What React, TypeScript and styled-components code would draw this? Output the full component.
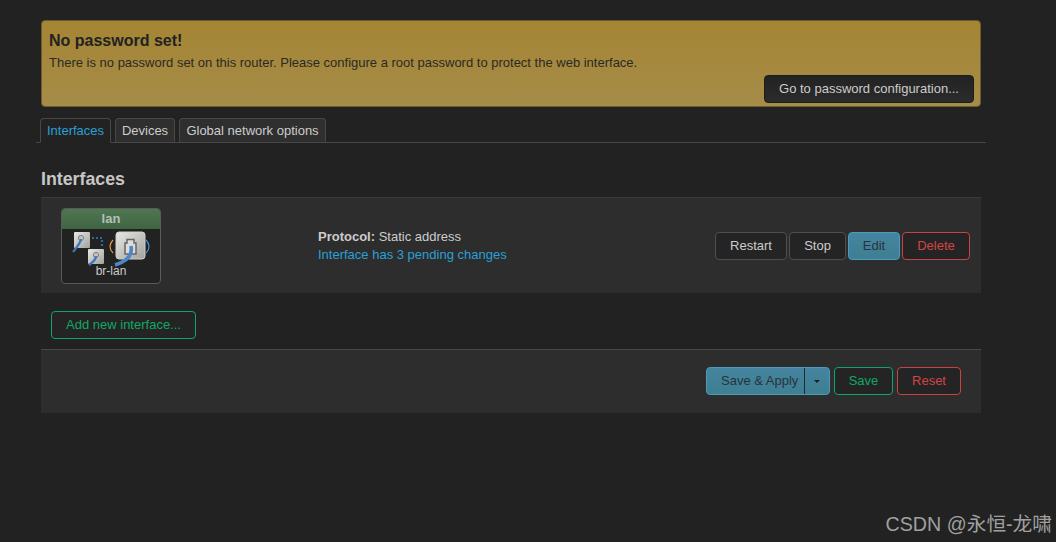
import React from "react";
import styled, { createGlobalStyle } from "styled-components";

const Global = createGlobalStyle`
  html, body { margin: 0; padding: 0; background: #222222; height: 100%; }
  body { font-family: "Liberation Sans", Arial, sans-serif; font-size: 13px; color: #cccccc; overflow: hidden; }
  #root { height: 100%; }
`;

const Page = styled.main`
  box-sizing: border-box;
  width: 940px;
  margin-left: 41px;
  padding-top: 20px;
`;

const Alert = styled.section`
  box-sizing: border-box;
  height: 87px;
  padding: 11px 6px 3px 7px;
  border: 1px solid #6d5c2b;
  border-radius: 4px;
  background: linear-gradient(#a58534, #a58c48);
  color: #222222;
  display: flex;
  flex-direction: column;
`;

const AlertTitle = styled.h4`
  margin: 0;
  font-size: 16px;
  line-height: 18px;
  font-weight: 700;
`;

const AlertText = styled.p`
  margin: 5px 0 0;
  font-size: 13px;
  line-height: 15px;
  color: #2a2a26;
`;

const AlertActions = styled.div`
  margin-top: auto;
  display: flex;
  justify-content: flex-end;
`;

const Button = styled.button<{ $tone?: "plain" | "dark" | "blue" | "red" | "green"; $w: number }>`
  box-sizing: border-box;
  width: ${(p) => p.$w}px;
  height: 28px;
  padding: 0 0 1px;
  border-radius: 4px;
  font-family: inherit;
  font-size: 13px;
  text-align: center;
  border: 1px solid
    ${(p) =>
      p.$tone === "blue" ? "#4a9bbd" : p.$tone === "red" ? "#c84343" : p.$tone === "green" ? "#0fa46a" : p.$tone === "dark" ? "#1c1c1c" : "#4e4e4e"};
  color: ${(p) =>
    p.$tone === "blue" ? "#27343b" : p.$tone === "red" ? "#d24545" : p.$tone === "green" ? "#10a865" : "#cccccc"};
  background: ${(p) =>
    p.$tone === "blue" ? "linear-gradient(#44849f, #3f7f92)" : p.$tone === "dark" ? "linear-gradient(#232323, #2b2b2b)" : "#242424"};
`;

const Tabs = styled.nav`
  display: flex;
  align-items: flex-end;
  gap: 4px;
  height: 24px;
  margin: 11px -5px 0 -5px;
  padding-left: 4px;
  border-bottom: 1px solid #484848;
`;

const Tab = styled.div<{ $active?: boolean; $w: number }>`
  box-sizing: border-box;
  width: ${(p) => p.$w}px;
  height: ${(p) => (p.$active ? 25 : 24)}px;
  margin-bottom: ${(p) => (p.$active ? -1 : 0)}px;
  text-align: center;
  font-size: 13px;
  line-height: 23px;
  border: 1px solid #484848;
  border-bottom: ${(p) => (p.$active ? "1px solid #222222" : "none")};
  border-radius: 4px 4px 0 0;
  background: ${(p) => (p.$active ? "#222222" : "#2f2f2f")};
  color: ${(p) => (p.$active ? "#2aa0d6" : "#cccccc")};
`;

const Heading = styled.h3`
  margin: 26px 0 0;
  font-size: 17.8px;
  line-height: 20px;
  font-weight: 700;
  color: #c6c6c6;
`;

const Row = styled.div`
  box-sizing: border-box;
  margin-top: 8px;
  height: 96px;
  display: grid;
  grid-template-columns: 277px 1fr auto;
  align-items: center;
  padding-right: 11px;
  background: #2d2d2d;
  border-top: 1px solid #3a3a3a;
`;

const BadgeCell = styled.div`
  padding-left: 20px;
`;

const Badge = styled.div`
  box-sizing: border-box;
  width: 100px;
  height: 76px;
  border: 1px solid #5a5a5a;
  border-radius: 4px;
  background: #222222;
  overflow: hidden;
  text-align: center;
  display: flex;
  flex-direction: column;
`;

const BadgeHead = styled.div`
  height: 20px;
  line-height: 19px;
  font-size: 13px;
  font-weight: 700;
  color: #b4c0b8;
  background: linear-gradient(#4f7750, #3f6442);
`;

const BadgeIcons = styled.div`
  height: 36px;
  display: flex;
  justify-content: center;
`;

const BadgeName = styled.div`
  font-size: 12px;
  line-height: 13px;
  color: #cccccc;
`;

const Info = styled.div`
  font-size: 13px;
  line-height: 18px;
`;

const Label = styled.strong`
  font-weight: 700;
`;

const Pending = styled.div`
  color: #2aa0d6;
`;

const Actions = styled.div`
  display: flex;
  gap: 2px;
`;

const AddRow = styled.div`
  padding: 18px 0 10px 10px;
`;

const Footer = styled.footer`
  box-sizing: border-box;
  height: 64px;
  padding: 17px 20px 0 0;
  display: flex;
  justify-content: flex-end;
  gap: 4px;
  background: #2d2d2d;
  border-top: 1px solid #484848;
`;

const Split = styled.div`
  box-sizing: border-box;
  width: 124px;
  height: 28px;
  display: flex;
  border: 1px solid #4a9bbd;
  border-radius: 4px;
  background: linear-gradient(#44849f, #3f7f92);
  color: #27343b;
  font-size: 13px;
  line-height: 25px;
`;

const SplitLabel = styled.span`
  box-sizing: border-box;
  width: 98px;
  padding-left: 14px;
  white-space: nowrap;
  border-right: 1px solid #1e2a30;
`;

const SplitArrow = styled.span`
  flex: 1;
  display: flex;
  align-items: center;
  justify-content: center;
`;

const Caret = styled.i`
  width: 0;
  height: 0;
  border-left: 3px solid transparent;
  border-right: 3px solid transparent;
  border-top: 3px solid #1c1c1c;
`;

const Watermark = styled.div`
  position: absolute;
  right: 4px;
  bottom: 5px;
  font-family: "Liberation Sans", "Noto Sans CJK SC", sans-serif;
  font-size: 19.7px;
  line-height: 26px;
  color: #a0a0a0;
`;

function PortIcons() {
  return (
    <svg width="82" height="38" viewBox="0 0 82 38" aria-hidden="true">
      <defs>
        <linearGradient id="pg" x1="0" y1="0" x2="1" y2="1">
          <stop offset="0" stopColor="#e8e8e4" />
          <stop offset="1" stopColor="#a2a29d" />
        </linearGradient>
      </defs>
      <rect x="4" y="3" width="16" height="16" rx="1" fill="url(#pg)" />
      <circle cx="11" cy="9" r="2.6" fill="#c4c4c4" stroke="#7e7e7e" />
      <path d="M11 10 C10 15 7 18 3 23" fill="none" stroke="#3d78bb" strokeWidth="2.2" />
      <path d="M22 9h10v9" fill="none" stroke="#2c66a4" strokeWidth="2.2" strokeDasharray="2 2" />
      <rect x="18" y="20" width="16" height="15" rx="1" fill="url(#pg)" />
      <circle cx="26" cy="26" r="2.6" fill="#c4c4c4" stroke="#7e7e7e" />
      <path d="M26 27 C26 31 23 33 19 36" fill="none" stroke="#3d78bb" strokeWidth="2.2" />
      <path d="M43 11 C39 15 39 20 43 24" fill="none" stroke="#e29a36" strokeWidth="1.2" />
      <rect x="46" y="3" width="29" height="27" rx="3" fill="url(#pg)" stroke="#cfcfcb" />
      <path d="M57 14v-3.5h7V14h2v11H55V14z" fill="#dcdcda" stroke="#666666" strokeWidth="1.5" />
      <path d="M61 17 C63 27 55 33 45 36" fill="none" stroke="#4d86c9" strokeWidth="3.6" />
      <path d="M76 11 C80 15 80 20 76 24" fill="none" stroke="#3f92d8" strokeWidth="1.2" />
    </svg>
  );
}

export default function App() {
  return (
    <>
      <Global />
      <Page>
        <Alert>
          <AlertTitle>No password set!</AlertTitle>
          <AlertText>There is no password set on this router. Please configure a root password to protect the web interface.</AlertText>
          <AlertActions>
            <Button $tone="dark" $w={210}>Go to password configuration...</Button>
          </AlertActions>
        </Alert>
        <Tabs>
          <Tab $active $w={71}>Interfaces</Tab>
          <Tab $w={60}>Devices</Tab>
          <Tab $w={147}>Global network options</Tab>
        </Tabs>
        <Heading>Interfaces</Heading>
        <Row>
          <BadgeCell>
            <Badge>
              <BadgeHead>lan</BadgeHead>
              <BadgeIcons><PortIcons /></BadgeIcons>
              <BadgeName>br-lan</BadgeName>
            </Badge>
          </BadgeCell>
          <Info>
            <div><Label>Protocol:</Label> Static address</div>
            <Pending>Interface has 3 pending changes</Pending>
          </Info>
          <Actions>
            <Button $w={72}>Restart</Button>
            <Button $w={57}>Stop</Button>
            <Button $tone="blue" $w={52}>Edit</Button>
            <Button $tone="red" $w={68}>Delete</Button>
          </Actions>
        </Row>
        <AddRow>
          <Button $tone="green" $w={145}>Add new interface...</Button>
        </AddRow>
        <Footer>
          <Split>
            <SplitLabel>Save &amp; Apply</SplitLabel>
            <SplitArrow><Caret /></SplitArrow>
          </Split>
          <Button $tone="green" $w={59}>Save</Button>
          <Button $tone="red" $w={64}>Reset</Button>
        </Footer>
      </Page>
      <Watermark>CSDN @永恒-龙啸</Watermark>
    </>
  );
}
